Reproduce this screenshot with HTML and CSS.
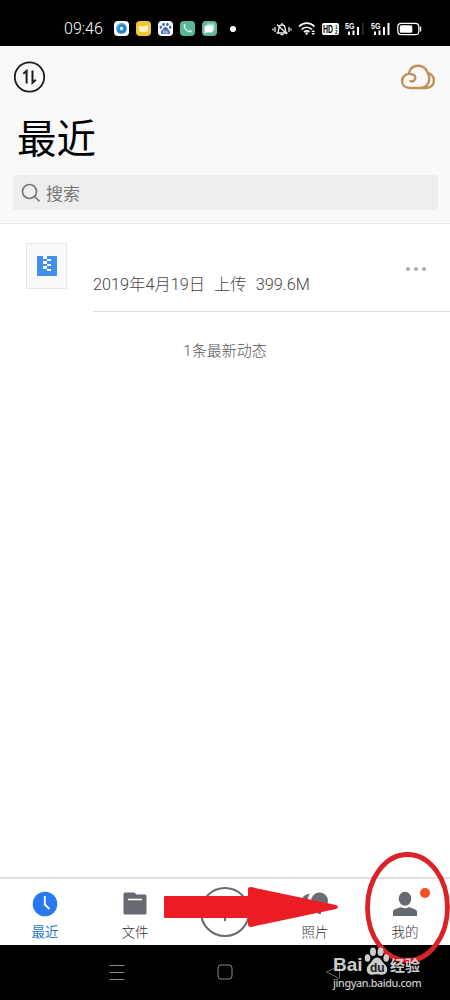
FILE: index.html
```html
<!DOCTYPE html>
<html lang="zh-CN">
<head>
    <meta charset="UTF-8">
    <meta name="viewport" content="width=device-width, initial-scale=1.0">
    <title>最近</title>
    <link rel="stylesheet" href="styles.css">
</head>
<body>
    <div class="phone">
        <div class="status-bar">
            <span class="time">09:46</span>
            <div class="apps">
                <svg width="15" height="15" viewBox="0 0 15 15"><rect width="15" height="15" rx="4" fill="#fff"/><circle cx="7.5" cy="7.5" r="5.3" fill="#2787c9"/><path d="M3 8a5 5 0 0 1 7-5" fill="none" stroke="#63b5e8" stroke-width="1.5"/><circle cx="7.5" cy="7.5" r="1.7" fill="#fff"/></svg>
                <svg width="15" height="15" viewBox="0 0 15 15"><rect width="15" height="15" rx="4" fill="#efc53c"/><path d="M3 4.5l4 1 5-1.5v6l-5 1.3-4-1z" fill="#fff3c4"/></svg>
                <svg width="15" height="15" viewBox="0 0 15 15"><rect width="15" height="15" rx="4" fill="#fff"/><g fill="#3f69b4"><ellipse cx="5.5" cy="3.5" rx="1.3" ry="1.8"/><ellipse cx="9.4" cy="3.5" rx="1.3" ry="1.8"/><ellipse cx="2.8" cy="6.3" rx="1.2" ry="1.7"/><ellipse cx="12.2" cy="6.3" rx="1.2" ry="1.7"/><path d="M7.5 6c2 0 2.3 2.2 3.8 3.5 1.6 1.8.5 4-1.5 3.6-1.6-.4-3-.4-4.600 0-2 .4-3.100-1.800-1.500-3.600C5.200 8.200 5.500 6 7.500 6z"/></g><path d="M5.300 9.700h1.600v2H5.300zM8.200 9.700v2h1.700v-2" fill="none" stroke="#fff" stroke-width=".6"/></svg>
                <svg width="15" height="15" viewBox="0 0 15 15"><rect width="15" height="15" rx="4" fill="#58b997"/><path d="M4 4c0 3.500 3.300 7 7 7" fill="none" stroke="#e8fff6" stroke-width="1.100"/><path d="M3.500 3.500l1.500-.3.900 2-1.200 1zM11.500 11.500l.2-1.700-1.900-.9-1 1.200z" fill="#e8fff6"/></svg>
                <svg width="15" height="15" viewBox="0 0 15 15"><rect width="15" height="15" rx="4" fill="#62b998"/><rect x="4.500" y="2.500" width="8" height="7" rx="1.500" fill="#a9ddc9"/><path d="M4 4.500h5.500q1.500 0 1.500 1.500v4q0 1.500-1.500 1.500H5L2.500 12.500V6Q2.500 4.500 4 4.500z" fill="#fff"/></svg>
            </div>
            <span class="more-dot"></span>
            <div class="signals">
                <svg width="20" height="16" viewBox="0 0 20 16" fill="none" stroke="#eee" stroke-width="1.300"><path d="M4.500 12h11M6 11.500l1-4C7 5 8 4 10 4s3 1 3 3.500l1 4M10 2v2M8.500 13.700h3M5 3.500l10 9.500M3 6v5M1 7.500v2M17 6v5M19 7.500v2"/></svg>
                <svg width="18" height="15" viewBox="0 0 18 15" fill="none" stroke="#fff" stroke-width="1.700"><path d="M1 5.500c4.500-4.500 11-4.500 15.500 0M3.500 8.500c3-3 7.500-3 10.500 0M6 11c1.700-1.500 3.800-1.500 5.500 0"/><circle cx="8.700" cy="12.500" r="1.200" fill="#fff" stroke="none"/><path d="M13.300 11l1.900-2 1.900 2zM13.300 12l1.900 2 1.900-2z" fill="#fff" stroke="none"/></svg>
                <svg width="17" height="14" viewBox="0 0 17 14"><rect y="1" width="17" height="12" rx="2" fill="#fff"/><text x="1" y="10.800" class="hd" textLength="10" lengthAdjust="spacingAndGlyphs">HD</text><text x="13" y="6.500" class="hd-sub">1</text><text x="13" y="12" class="hd-sub">2</text></svg>
                <svg width="20" height="16" viewBox="0 0 20 16" fill="#fff"><text x="0" y="7.500" class="net" textLength="9.500" lengthAdjust="spacingAndGlyphs">5G</text><path d="M3 10.500h2V14H3zM7.500 9.500h2V14h-2zM12 6h2v8h-2z"/><path d="M17 2h1.500v12H17z" fill="#333"/></svg>
                <svg width="20" height="16" viewBox="0 0 20 16" fill="#fff"><text x="0" y="7.500" class="net" textLength="9.500" lengthAdjust="spacingAndGlyphs">5G</text><path d="M3 10.500h2V14H3zM7.500 9.500h2V14h-2zM12 6h2v8h-2zM16.500 2h2v12h-2z"/></svg>
                <svg width="25" height="14" viewBox="0 0 25 14"><rect x=".8" y="1.300" width="21" height="11.400" rx="3.500" fill="none" stroke="#fff" stroke-width="1.200"/><rect x="2.800" y="3.200" width="12.500" height="7.600" rx="1.500" fill="#fff"/><path d="M23.500 4.500v5" stroke="#fff" stroke-width="1.400"/></svg>
            </div>
        </div>

        <div class="header">
            <div class="header-tools">
                <svg width="33" height="32" viewBox="0 0 33 32" fill="none" stroke="#1c1c1e" stroke-width="1.800"><circle cx="16.500" cy="16" r="14.700"/><path d="M10.300 12.800l3.300-2.800V22.500M19.500 9.500V21.800l3.300-3" stroke-width="2"/></svg>
                <svg class="cloud" width="36" height="26" viewBox="0 0 36 26" fill="none" stroke="#c4905a" stroke-width="2.400" stroke-linecap="round"><path d="M10.500 17.200c4.500 1.500 7-5.200 2-6.800C7 8.600 2 12 2 17c0 4.500 3.500 7 8 7h9.500c10 0 11.500-10 8-15.500C24-.8 11-.3 9 9M28.500 9c8 3.500 7 15-3 15h-6"/></svg>
            </div>
            <h1>最近</h1>
            <div class="search">
                <svg width="20" height="20" viewBox="0 0 20 20" fill="none" stroke="#777" stroke-width="1.700"><circle cx="8.500" cy="8.500" r="7"/><path d="M13.500 13.500l5 4.800"/></svg>
                <span>搜索</span>
            </div>
        </div>

        <div class="content">
            <div class="file-row">
                <div class="thumb">
                    <svg width="20" height="20" viewBox="0 0 20 20" shape-rendering="crispEdges"><path d="M0 0h20v20H0z" fill="#438fec"/><path d="M6 0h4v3H6zM10 3h4v2h-4zM6 5h4v3H6zM10 8h4v2h-4zM6 10h4v3H6zM10 13h4v2h-4z" fill="#fff"/></svg>
                </div>
                <div class="file-info">
                    <span class="meta"><span>2019年4月19日</span><span>上传</span><span>399.6M</span></span>
                    <div class="dots"><i></i><i></i><i></i></div>
                </div>
            </div>
            <p class="summary">1条最新动态</p>
        </div>

        <div class="tab-bar">
            <div class="tab active">
                <svg width="26" height="26" viewBox="0 0 26 26"><circle cx="13" cy="13" r="12.300" fill="#2878f0"/><path d="M12.800 5v8.500l4.700 4.500" fill="none" stroke="#fff" stroke-width="1.800"/></svg>
                <span>最近</span>
            </div>
            <div class="tab">
                <svg width="26" height="26" viewBox="0 0 26 26"><path d="M3 1.500h9.500l1.800 2H23q1.500 0 1.500 1.500v17q0 1.500-1.500 1.500H3Q1.500 23.500 1.500 22V3Q1.500 1.500 3 1.500z" fill="#646a70"/><path d="M6 8.500h14" stroke="#fff" stroke-width="1.600"/></svg>
                <span>文件</span>
            </div>
            <div class="tab">
                <svg class="add" width="52" height="52" viewBox="0 0 52 52" fill="none" stroke="#6d6d6f" stroke-width="2.200"><circle cx="26" cy="26" r="24"/><path d="M26 16v19M16.500 25.500h19"/></svg>
            </div>
            <div class="tab">
                <svg width="26" height="26" viewBox="0 0 26 26" fill="#676d73"><circle cx="17.500" cy="10" r="8.500"/><path d="M0 8q2-5 8-5Q5 6 5.500 14H1zM16 17h3v6h-3z"/></svg>
                <span>照片</span>
            </div>
            <div class="tab">
                <svg width="26" height="26" viewBox="0 0 26 26" fill="#646a70"><ellipse cx="13" cy="7.700" rx="6.300" ry="7"/><path d="M1 25v-4.500Q1 19 3 18.200l6-2.200q4 2.500 8 0l6 2.200q2 .8 2 2.300V25z"/></svg>
                <span>我的</span>
                <i class="badge"></i>
            </div>
        </div>

        <div class="nav-bar">
            <svg width="16" height="16" viewBox="0 0 16 16" stroke="#888" stroke-width="1"><path d="M.5 1.500h15M.5 8.500h15M.5 15.500h15"/></svg>
            <svg width="16" height="16" viewBox="0 0 16 16" fill="none" stroke="#888"><rect x="1" y="1" width="14" height="14" rx="3"/></svg>
            <svg width="16" height="16" viewBox="0 0 16 16" fill="none" stroke="#666"><path d="M14.500 1.500v13L1.500 8z"/></svg>
        </div>

        <svg class="markup" width="90" height="120" viewBox="0 0 90 120" fill="none"><ellipse cx="47.500" cy="62.500" rx="40" ry="53" stroke="#db2229" stroke-width="4.800"/></svg>
        <svg class="arrow" width="176" height="42" viewBox="0 0 176 42"><path d="M2 10h83V3q0-2 3-2l85 18q4 2 0 4L88 41q-3 0-3-3v-6H2q-1 0-1-1V11q0-1 1-1z" fill="#ec1c24"/></svg>
        <div class="watermark">
            <div class="brand">
                <span class="latin">Bai</span>
                <svg width="26" height="29" viewBox="0 0 25 29"><g fill="#ddd"><ellipse cx="8.500" cy="4.800" rx="3" ry="4.300"/><ellipse cx="16" cy="4.800" rx="3" ry="4.300"/><ellipse cx="3" cy="11" rx="2.800" ry="3.800"/><ellipse cx="21.700" cy="11" rx="2.800" ry="3.800"/><path d="M12.500 10.500c4 0 4.500 4 7.500 6.500 5 4.300 2.800 11-3 10.700q-4.500-.8-9 0c-5.800.3-8-6.400-3-10.700 3-2.500 3.500-6.500 7.500-6.500z"/></g><text x="5.500" y="25" class="du">du</text></svg>
                <span class="cjk">经验</span>
            </div>
            <span class="site">jingyan.baidu.com</span>
        </div>
    </div>
</body>
</html>
```
FILE: styles.css
```css
* {
    box-sizing: border-box;
}

body {
    margin: 0;
    font-family: Roboto, "Noto Sans CJK SC", sans-serif;
    font-weight: 300;
    background: #fff;
}

svg {
    display: block;
    flex: none;
}

.phone {
    position: relative;
    width: 450px;
    height: 1000px;
    display: flex;
    flex-direction: column;
    overflow: hidden;
}

.status-bar {
    height: 46px;
    padding: 11px 28px 0 64px;
    background: #000;
    color: #fff;
    display: flex;
    align-items: center;
    flex: none;
}

.time {
    width: 50px;
    font-size: 16px;
    line-height: 35px;
}

.apps {
    display: flex;
    gap: 7px;
}

.more-dot {
    width: 6px;
    height: 6px;
    margin-left: 13px;
    border-radius: 50%;
    background: #fff;
}

.signals {
    display: flex;
    align-items: center;
    gap: 6px;
    margin-left: auto;
}

.hd {
    font: bold 10.500px "Liberation Sans", sans-serif;
}

.hd-sub {
    font: bold 4.500px "Liberation Sans", sans-serif;
}

.net {
    font: bold 9px "Liberation Sans", sans-serif;
}

.header {
    height: 178px;
    padding: 15px 12px 0 13px;
    background: #f9f9fa;
    border-bottom: 1px solid #e9e9eb;
    flex: none;
}

.header-tools {
    display: flex;
    justify-content: space-between;
    align-items: center;
    padding-right: 2px;
}

h1 {
    margin: 18px 0 0 4px;
    font-size: 39.500px;
    font-weight: 400;
    line-height: 58px;
    color: #000;
}

.search {
    height: 35px;
    margin-top: 6px;
    padding-left: 8px;
    display: flex;
    align-items: center;
    gap: 5px;
    border-radius: 3px;
    background: #eee;
    color: #777;
    font-size: 17px;
    font-weight: 400;
}

.content {
    flex: 1;
}

.file-row {
    height: 88px;
    display: flex;
    padding-left: 26px;
}

.thumb {
    width: 41px;
    height: 46px;
    margin-top: 19px;
    border: 1px solid #e8e8e8;
    background: #fafafa;
    display: flex;
    align-items: center;
    justify-content: center;
    flex: none;
}

.file-info {
    flex: 1;
    margin-left: 26px;
    padding: 40px 24px 0 0;
    border-bottom: 1px solid #dedede;
    display: flex;
    justify-content: space-between;
}

.meta {
    display: flex;
    gap: 9px;
    padding-top: 9px;
    font-size: 16.300px;
    line-height: 24px;
    color: #444;
}

.dots {
    display: flex;
    gap: 4px;
    padding-top: 3px;
}

.dots i {
    width: 4px;
    height: 4px;
    border-radius: 50%;
    background: #aaa;
}

.summary {
    margin: 28px 0 0;
    text-align: center;
    font-size: 15px;
    line-height: 22px;
    color: #555;
}

.tab-bar {
    height: 68px;
    border-top: 2px solid #dfdfdf;
    display: flex;
    flex: none;
}

.tab {
    position: relative;
    flex: 1;
    display: flex;
    flex-direction: column;
    align-items: center;
    padding-top: 12px;
    font-size: 13.500px;
    line-height: 20px;
    color: #333;
}

.tab span {
    margin-top: 5px;
}

.tab.active {
    color: #2878c8;
    font-weight: 400;
}

.add {
    margin-top: -5px;
}

.badge {
    position: absolute;
    left: 60px;
    top: 9px;
    width: 10px;
    height: 10px;
    border-radius: 50%;
    background: #f4511e;
}

.nav-bar {
    height: 55px;
    padding: 0 109px 1px;
    background: #000;
    display: flex;
    align-items: center;
    justify-content: space-between;
    flex: none;
}

.markup {
    position: absolute;
    left: 360px;
    top: 845px;
}

.arrow {
    position: absolute;
    left: 163px;
    top: 886px;
}

.watermark {
    position: absolute;
    left: 333px;
    top: 947px;
    color: #ddd;
    opacity: .92;
}

.brand {
    height: 29px;
    display: flex;
    align-items: flex-end;
}

.latin {
    width: 31px;
    font: bold 19px/23px "Liberation Sans", sans-serif;
}

.du {
    font: bold 12px "Liberation Sans", sans-serif;
    fill: #222;
}

.cjk {
    font: bold 15px/22px "Noto Sans CJK SC", sans-serif;
}

.site {
    display: block;
    font: 500 10.800px/13px "Noto Sans", sans-serif;
    letter-spacing: -.4px;
}
```
